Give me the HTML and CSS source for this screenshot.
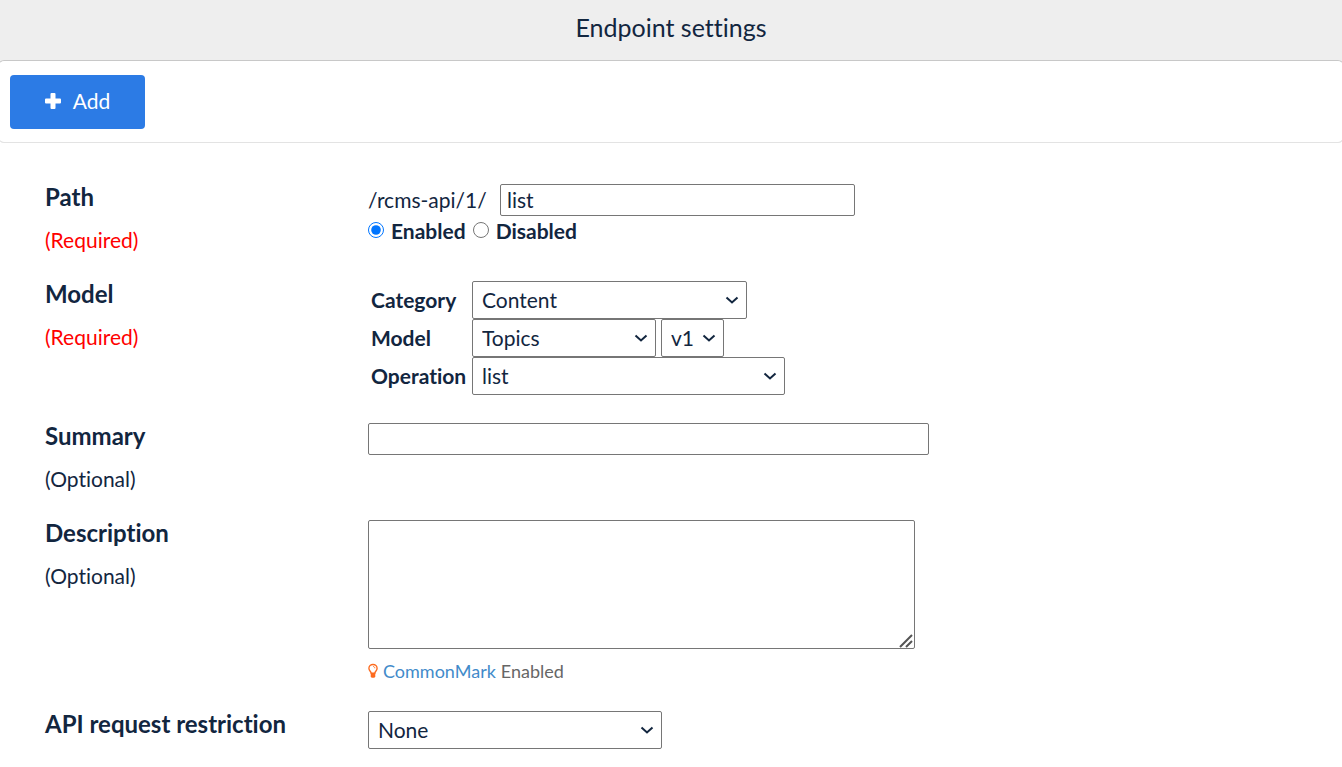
FILE: index.html
```html
<!DOCTYPE html>
<html lang="en">

<head>
  <meta charset="UTF-8">
  <meta name="viewport" content="width=device-width, initial-scale=1.0">
  <title>Endpoint settings</title>
  <link rel="stylesheet" href="styles.css">
</head>

<body>
  <h1 class="page-title">Endpoint settings</h1>

  <div class="toolbar">
    <button type="submit" form="endpoint-form" class="btn-add">
      <svg class="icon-plus" viewBox="0 0 16 16" aria-hidden="true">
        <path d="M6.500 0h3q1 0 1 1v4.500H15q1 0 1 1v3q0 1-1 1h-4.500V15q0 1-1 1h-3q-1 0-1-1v-4.500H1q-1 0-1-1v-3q0-1 1-1h4.500V1q0-1 1-1z" />
      </svg>
      Add
    </button>
  </div>

  <form id="endpoint-form" class="settings">
    <div class="row">
      <div class="row-label">
        <label class="row-title" for="path">Path</label>
        <span class="required">(Required)</span>
      </div>
      <div class="row-content">
        <div class="path-line">
          <span class="path-prefix">/rcms-api/1/</span>
          <input id="path" class="path-input" type="text" value="list">
        </div>
        <div class="radio-line">
          <input id="enabled" type="radio" name="status" checked>
          <label for="enabled">Enabled</label>
          <input id="disabled" type="radio" name="status">
          <label for="disabled">Disabled</label>
        </div>
      </div>
    </div>

    <div class="row">
      <div class="row-label">
        <span class="row-title">Model</span>
        <span class="required">(Required)</span>
      </div>
      <div class="row-content model-grid">
        <label for="category">Category</label>
        <div class="selects">
          <div class="select-box select-category">
            <select id="category">
              <option>Content</option>
            </select>
            <svg class="chevron" viewBox="0 0 14 8" aria-hidden="true"><path d="M1.500 1.500L7 6.500l5.500-5" /></svg>
          </div>
        </div>
        <label for="model">Model</label>
        <div class="selects">
          <div class="select-box select-model">
            <select id="model">
              <option>Topics</option>
            </select>
            <svg class="chevron" viewBox="0 0 14 8" aria-hidden="true"><path d="M1.500 1.500L7 6.500l5.500-5" /></svg>
          </div>
          <div class="select-box select-version">
            <select aria-label="Version">
              <option>v1</option>
            </select>
            <svg class="chevron" viewBox="0 0 14 8" aria-hidden="true"><path d="M1.500 1.500L7 6.500l5.500-5" /></svg>
          </div>
        </div>
        <label for="operation">Operation</label>
        <div class="selects">
          <div class="select-box select-operation">
            <select id="operation">
              <option>list</option>
            </select>
            <svg class="chevron" viewBox="0 0 14 8" aria-hidden="true"><path d="M1.500 1.500L7 6.500l5.500-5" /></svg>
          </div>
        </div>
      </div>
    </div>

    <div class="row">
      <div class="row-label">
        <label class="row-title" for="summary">Summary</label>
        <span>(Optional)</span>
      </div>
      <div class="row-content">
        <input id="summary" class="summary-input" type="text">
      </div>
    </div>

    <div class="row">
      <div class="row-label">
        <label class="row-title" for="description">Description</label>
        <span>(Optional)</span>
      </div>
      <div class="row-content">
        <div class="textarea-box">
          <textarea id="description"></textarea>
          <svg class="grip" viewBox="0 0 14 14" aria-hidden="true"><path d="M1 13L13 1M7 13l6-6" /></svg>
        </div>
        <p class="hint">
          <svg class="icon-bulb" viewBox="0 0 11 16" aria-hidden="true">
            <path class="bulb-glass" d="M3.500 10.500C3.500 8.500 1 7.800 1 5a4.500 4.200 0 0 1 9 0c0 2.800-2.500 3.500-2.500 5.500z" />
            <path class="bulb-shine" d="M5.500 3c1.200 0 2 .8 2 2" />
            <path class="bulb-base" d="M3 10.500h5V14l-1 1.500H4L3 14z" />
          </svg>
          <a href="#">CommonMark</a> Enabled
        </p>
      </div>
    </div>

    <div class="row">
      <div class="row-label">
        <label class="row-title" for="restriction">API request restriction</label>
      </div>
      <div class="row-content">
        <div class="select-box select-restriction">
          <select id="restriction">
            <option>None</option>
          </select>
          <svg class="chevron" viewBox="0 0 14 8" aria-hidden="true"><path d="M1.500 1.500L7 6.500l5.500-5" /></svg>
        </div>
      </div>
    </div>
  </form>
</body>

</html>
```

FILE: styles.css
```css
* {
  box-sizing: border-box;
}

body {
  margin: 0;
  overflow-x: hidden;
  background-color: #fff;
  color: #12263f;
  font-family: Lato, sans-serif;
  font-size: 21px;
  font-variant-ligatures: none;
  line-height: 26px;
}

.page-title {
  margin: 0;
  padding: 11px 0 25px;
  background-color: #eee;
  font-size: 25px;
  font-weight: 400;
  line-height: 32px;
  text-align: center;
}

.toolbar {
  margin: -8px -2px 0;
  padding: 14px 11px 13px;
  background-color: #fff;
  border: 1px solid #e3e3e3;
  border-top-color: #c8c8c8;
  border-radius: 6px;
}

/* 追加ボタン */
.btn-add {
  display: flex;
  align-items: center;
  justify-content: center;
  gap: 12px;
  width: 135px;
  height: 54px;
  padding: 0 0 3px;
  border: none;
  border-radius: 4px;
  background-color: #2c7be5;
  color: #fff;
  font: inherit;
  cursor: pointer;
}

.icon-plus {
  width: 16px;
  height: 16px;
  fill: #fff;
}

.settings {
  display: flex;
  flex-direction: column;
  gap: 28px;
  padding: 41px 45px 17px;
}

.row {
  display: grid;
  grid-template-columns: 323px 1fr;
}

.row-label {
  display: flex;
  flex-direction: column;
  align-items: flex-start;
  gap: 17px;
}

.row-title {
  font-size: 24px;
  font-weight: 700;
  line-height: 26px;
}

.required {
  color: #f00;
}

input[type="text"],
select,
textarea {
  display: block;
  margin: 0;
  border: 1px solid #767676;
  border-radius: 2px;
  background-color: #fff;
  color: #12263f;
  font: inherit;
}

input[type="text"] {
  height: 32px;
  padding: 0 6px 1px;
}

/* 下拉框 */
.select-box {
  position: relative;
}

select {
  width: 100%;
  height: 38px;
  padding: 0 9px 1px;
  appearance: none;
}

.chevron {
  position: absolute;
  top: 15px;
  right: 8px;
  width: 14px;
  height: 8px;
  fill: none;
  stroke: #12263f;
  stroke-width: 2;
  pointer-events: none;
}

.path-line {
  display: flex;
  align-items: center;
}

.path-prefix {
  min-width: 132px;
}

.path-input {
  width: 355px;
}

.radio-line {
  display: flex;
  align-items: center;
  padding-top: 2px;
  font-weight: 700;
}

.radio-line input {
  width: 16px;
  height: 16px;
  margin: 0 7px 2px 0;
}

.radio-line label {
  margin-right: 7px;
}

.model-grid {
  display: grid;
  grid-template-columns: 98px 1fr;
  align-items: center;
  padding-left: 3px;
}

.model-grid label {
  font-weight: 700;
}

.selects {
  display: flex;
  gap: 5px;
  padding-left: 3px;
}

.select-category {
  width: 275px;
}

.select-model {
  width: 184px;
}

.select-version {
  width: 63px;
}

.select-operation {
  width: 313px;
}

.select-restriction {
  width: 294px;
}

.summary-input {
  width: 561px;
}

.textarea-box {
  position: relative;
  width: 547px;
}

textarea {
  width: 100%;
  height: 129px;
}

textarea::-webkit-resizer {
  display: none;
}

.grip {
  position: absolute;
  right: 2px;
  bottom: 1px;
  width: 14px;
  height: 14px;
  stroke: #555;
  stroke-width: 2;
  pointer-events: none;
}

.hint {
  display: flex;
  align-items: center;
  gap: 5px;
  margin: 10px 0 0;
  color: #666;
  font-size: 18px;
  line-height: 24px;
}

.hint a {
  color: #428bca;
  text-decoration: none;
}

.icon-bulb {
  width: 10px;
  height: 16px;
}

.bulb-glass,
.bulb-shine {
  fill: none;
  stroke: #fd6b1f;
  stroke-width: 1.5;
}

.bulb-shine {
  stroke-width: 1;
}

.bulb-base {
  fill: #fd6b1f;
}
```
